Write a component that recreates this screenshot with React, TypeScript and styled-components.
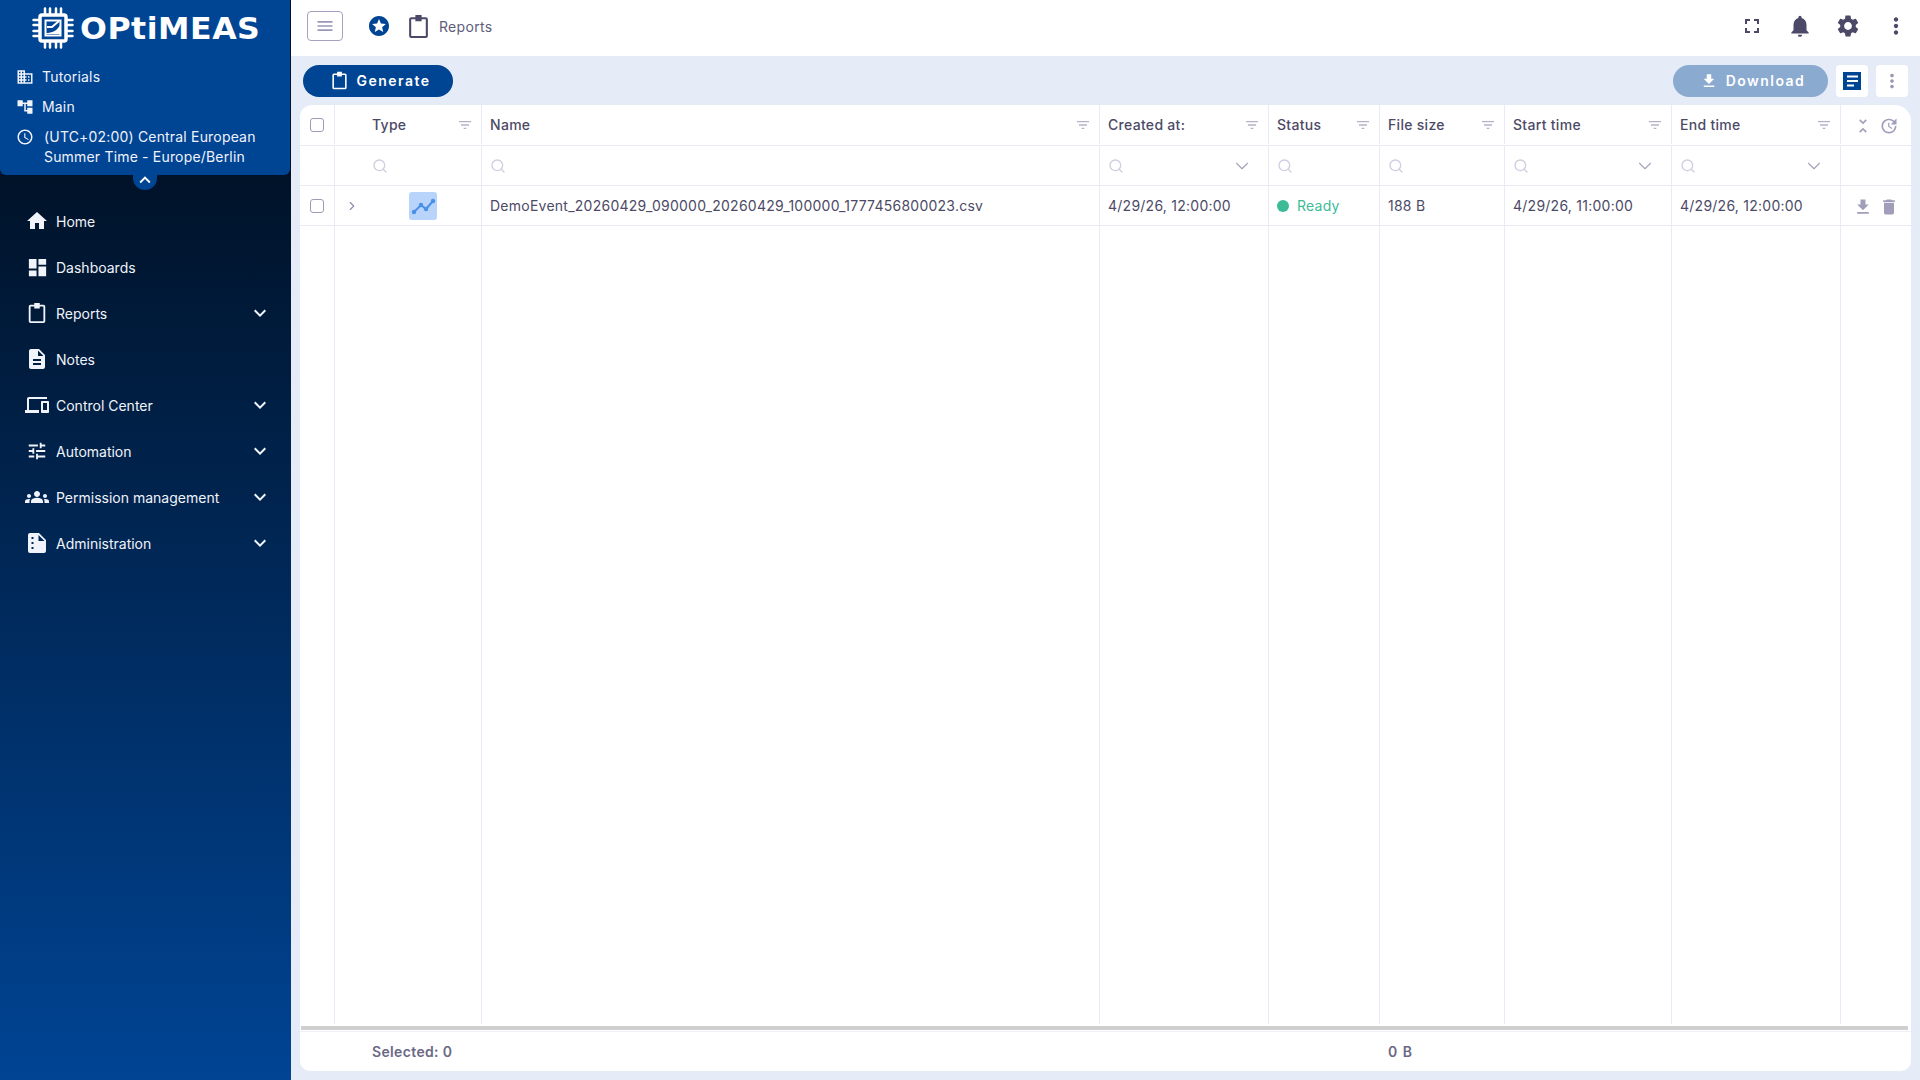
import React from "react";
import styled, { createGlobalStyle } from "styled-components";
import {
  MdAccountTree,
  MdDashboard,
  MdDelete,
  MdDescription,
  MdDevices,
  MdDomain,
  MdFileDownload,
  MdFilterList,
  MdFullscreen,
  MdGroups,
  MdHome,
  MdKeyboardArrowDown,
  MdKeyboardArrowUp,
  MdMenu,
  MdMoreVert,
  MdNotifications,
  MdOutlineAccessTime,
  MdSettings,
  MdStars,
  MdTune,
  MdUnfoldLess,
  MdUpdate,
} from "react-icons/md";
import { ChevronDown, ChevronRight, Search } from "lucide-react";

const ClipboardIcon = ({ size = 24 }: { size?: number }) => (
  <svg width={size} height={size} viewBox="0 0 24 24" fill="currentColor">
    <path
      fillRule="evenodd"
      d="M9 3V1h6v2h4a2 2 0 0 1 2 2v16a2 2 0 0 1-2 2H5a2 2 0 0 1-2-2V5a2 2 0 0 1 2-2h4zM5 5v16h14V5h-4v2H9V5H5z"
    />
  </svg>
);

const AdminIcon = ({ size = 24 }: { size?: number }) => (
  <svg width={size} height={size} viewBox="0 0 24 24" fill="currentColor">
    <path
      fillRule="evenodd"
      d="M5 2h9l7 7v11a2 2 0 0 1-2 2H5a2 2 0 0 1-2-2V4a2 2 0 0 1 2-2zM6.500 6v2h2V6h-2zm0 5v2h2v-2h-2zm0 5v2h2v-2h-2zM13.500 4v6h6z"
    />
  </svg>
);

const ChipLogo = () => (
  <svg width="42" height="42" viewBox="0 0 42 42" fill="none" stroke="#fff">
    <rect x="8" y="8" width="26" height="26" rx="2" strokeWidth="3.5" />
    <rect x="13.500" y="13.500" width="15" height="15" strokeWidth="2" />
    <path d="M14 26c6 0 11-2 14-8v9H14z" fill="#fff" stroke="none" />
    <path d="M15 20l5 0 7-6" stroke="#fff" strokeWidth="2" />
    <path
      d="M13 1.500v5M18 1.500v5M24 1.500v5M29 1.500v5M13 35.500v5M18 35.500v5M24 35.500v5M29 35.500v5M1.500 13h5M1.500 18h5M1.500 24h5M1.500 29h5M35.500 13h5M35.500 18h5M35.500 24h5M35.500 29h5"
      strokeWidth="2.500"
      strokeLinecap="round"
    />
  </svg>
);

const ChartGlyph = () => (
  <svg width="28" height="28" viewBox="0 0 28 28" fill="currentColor">
    <path d="M5 20l7-7 5 4 7-8" fill="none" stroke="currentColor" strokeWidth="2" />
    <circle cx="5" cy="20" r="2.200" />
    <circle cx="12" cy="13" r="2.200" />
    <circle cx="17" cy="17" r="2.200" />
    <circle cx="24" cy="9" r="2.200" />
  </svg>
);

const ViewGlyph = () => (
  <svg width="18" height="18" viewBox="0 0 18 18">
    <rect width="18" height="18" fill="#004494" />
    <rect x="4" y="3.500" width="11" height="2" fill="#fff" />
    <rect x="4" y="8" width="11" height="2" fill="#fff" />
    <rect x="4" y="12.500" width="7" height="2" fill="#fff" />
  </svg>
);

const GlobalStyle = createGlobalStyle`
  html, body {
    margin: 0;
    padding: 0;
    height: 100%;
    overflow: hidden;
    font-family: Inter, "Liberation Sans", sans-serif;
  }
  * {
    box-sizing: border-box;
  }
`;

const Page = styled.div`
  display: flex;
  height: 100vh;
  background: #e6ecf7;
`;

const Sidebar = styled.aside`
  width: 291px;
  flex-shrink: 0;
  display: flex;
  flex-direction: column;
  background: linear-gradient(180deg, #001228 16%, #004494 100%);
  color: #f0f3fa;
`;

const SideHead = styled.div`
  position: relative;
  width: 290px;
  height: 175px;
  padding: 8px 0 0 16px;
  background: #004494;
  border-radius: 0 0 6px 6px;
  font-size: 14px;
  letter-spacing: 0.18px;
`;

const Logo = styled.div`
  display: flex;
  align-items: center;
  gap: 6px;
  height: 40px;
  margin: 0 0 19px 16px;
`;

const LogoWord = styled.span`
  color: #fff;
  font-family: "DejaVu Sans", sans-serif;
  font-size: 31px;
  font-weight: 700;
  line-height: 40px;
  letter-spacing: 0.5px;
  white-space: nowrap;
  transform: scaleX(1.02);
  transform-origin: left center;
`;

const InfoRow = styled.div<{ $top?: boolean }>`
  display: flex;
  align-items: ${(p) => (p.$top ? "flex-start" : "center")};
  gap: ${(p) => (p.$top ? "10px" : "8px")};
  margin-bottom: 10px;
  min-height: 20px;
  line-height: 20px;
  svg {
    flex-shrink: 0;
    margin-top: ${(p) => (p.$top ? "1px" : "0")};
  }
`;

const CollapseTab = styled.div`
  position: absolute;
  left: 133px;
  bottom: -15px;
  width: 24px;
  height: 15px;
  background: #004494;
  border-radius: 0 0 12px 12px;
  display: flex;
  justify-content: center;
  align-items: flex-start;
  color: #fff;
  svg {
    margin-top: -6px;
  }
`;

const Menu = styled.nav`
  display: flex;
  flex-direction: column;
  padding-top: 23px;
`;

const MenuItem = styled.div`
  display: flex;
  align-items: center;
  height: 46px;
  padding: 0 19px 0 25px;
  font-size: 14px;
`;

const MenuIcon = styled.span`
  width: 24px;
  display: flex;
  justify-content: center;
  margin-right: 7px;
`;

const MenuLabel = styled.span`
  flex: 1;
`;

const Main = styled.main`
  flex: 1;
  min-width: 0;
  display: flex;
  flex-direction: column;
`;

const TopBar = styled.header`
  height: 56px;
  flex-shrink: 0;
  display: flex;
  align-items: center;
  padding: 0 10px 4px 16px;
  background: #fff;
  color: #4b4868;
`;

const MenuButton = styled.button`
  width: 36px;
  height: 30px;
  padding: 0;
  display: flex;
  align-items: center;
  justify-content: center;
  background: #fff;
  border: 1px solid #a5a3c2;
  border-radius: 4px;
  color: #9a98b8;
  margin-right: 24px;
`;

const StarWrap = styled.span`
  display: flex;
  color: #004494;
  margin-right: 15px;
`;

const Crumb = styled.span`
  margin-left: 8px;
  font-size: 14px;
  letter-spacing: 0.3px;
  color: #5e5c78;
`;

const TopRight = styled.div`
  margin-left: auto;
  display: flex;
  gap: 20px;
  align-items: center;
`;

const TopIcon = styled.span`
  width: 28px;
  display: flex;
  justify-content: center;
`;

const ToolBar = styled.div`
  height: 49px;
  flex-shrink: 0;
  display: flex;
  align-items: center;
  padding: 0 12px;
  gap: 8px;
`;

const PillButton = styled.button<{ $muted?: boolean; $width: number }>`
  width: ${(p) => p.$width}px;
  height: 32px;
  padding: 0 0 0 4px;
  display: flex;
  align-items: center;
  justify-content: center;
  gap: 8px;
  border: 0;
  border-radius: 16px;
  color: #fff;
  background: ${(p) => (p.$muted ? "#8aaad0" : "#004494")};
  font-family: inherit;
  font-size: 14px;
  font-weight: 600;
  letter-spacing: 1.45px;
  margin-right: ${(p) => (p.$muted ? "0" : "auto")};
`;

const SquareButton = styled.button`
  width: 32px;
  height: 32px;
  padding: 0;
  display: flex;
  align-items: center;
  justify-content: center;
  border: 0;
  border-radius: 4px;
  background: #fff;
  color: #9a98b0;
`;

const Card = styled.section`
  flex: 1;
  min-height: 0;
  display: flex;
  flex-direction: column;
  margin: 0 9px 9px 9px;
  background: #fff;
  border-radius: 12px 16px 10px 10px;
  overflow: hidden;
  font-size: 14px;
  color: #4c4a66;
`;

const Row = styled.div<{ $fill?: boolean; $head?: boolean }>`
  display: grid;
  grid-template-columns: 35px 147px 618px 169px 111px 125px 167px 169px 1fr;
  height: ${(p) => (p.$fill ? "auto" : p.$head ? "41px" : "40px")};
  flex: ${(p) => (p.$fill ? "1" : "none")};
  padding-bottom: ${(p) => (p.$head ? "1px" : "0")};
  border-bottom: ${(p) => (p.$fill ? "0" : "1px solid #e8ebf5")};
`;

const Cell = styled.div<{ $indent?: number }>`
  display: flex;
  align-items: center;
  justify-content: space-between;
  gap: 8px;
  min-width: 0;
  padding: 0 8px 0 ${(p) => p.$indent ?? 8}px;
  border-right: 1px solid #e8ebf5;
  white-space: nowrap;
  &:last-child {
    border-right: 0;
  }
`;

const HeadLabel = styled.span`
  font-weight: 500;
  letter-spacing: 0.3px;
`;

const FilterIcon = styled(MdFilterList)`
  color: #b4b2c8;
  flex-shrink: 0;
`;

const Check = styled.span`
  width: 14px;
  height: 14px;
  margin-left: 2px;
  border: 1px solid #9d9bb8;
  border-radius: 3px;
  background: #fff;
`;

const TypeCell = styled(Cell)`
  padding-right: 0;
  justify-content: flex-start;
`;

const Expander = styled.span`
  display: flex;
  color: #8f8dab;
  margin-left: 2px;
`;

const ChartTile = styled.span`
  width: 28px;
  height: 28px;
  margin-left: 42px;
  display: flex;
  align-items: center;
  justify-content: center;
  background: #b8d4fa;
  border-radius: 3px;
  color: #4a90e8;
`;

const CellText = styled.span`
  letter-spacing: 0.25px;
`;

const StatusBox = styled.span`
  display: flex;
  align-items: center;
  gap: 8px;
  letter-spacing: 0.25px;
  color: #3dbb97;
`;

const StatusDot = styled.span`
  width: 12px;
  height: 12px;
  border-radius: 50%;
  background: #3dbb97;
`;

const ActionIcons = styled.div`
  display: flex;
  align-items: center;
  gap: 6px;
  color: #a09eba;
  padding: 2px 0 0 4px;
`;

const DateChevron = styled(ChevronDown)`
  margin-right: 7px;
  color: #a5a3bd;
`;

const ScrollTrack = styled.div`
  height: 4px;
  margin: 2px 3px 1px 1px;
  flex-shrink: 0;
  background: #cfcfcf;
`;

const Footer = styled.div`
  display: grid;
  grid-template-columns: 1088px 1fr;
  height: 40px;
  flex-shrink: 0;
  align-items: center;
  border-top: 1px solid #eef0f7;
  color: #6b6885;
  font-size: 14px;
  font-weight: 600;
`;

const FooterCell = styled.span`
  padding-left: 72px;
  letter-spacing: 0.35px;
`;

const FooterSize = styled.span`
  letter-spacing: 1px;
`;

const menu = [
  { label: "Home", icon: <MdHome size={24} /> },
  { label: "Dashboards", icon: <MdDashboard size={23} /> },
  { label: "Reports", icon: <ClipboardIcon size={22} />, arrow: true },
  { label: "Notes", icon: <MdDescription size={24} /> },
  { label: "Control Center", icon: <MdDevices size={24} />, arrow: true },
  { label: "Automation", icon: <MdTune size={22} />, arrow: true },
  { label: "Permission management", icon: <MdGroups size={24} />, arrow: true },
  { label: "Administration", icon: <AdminIcon />, arrow: true },
];

const columns = [
  { label: "Name", date: false },
  { label: "Created at:", date: true },
  { label: "Status", date: false },
  { label: "File size", date: false },
  { label: "Start time", date: true },
  { label: "End time", date: true },
];

const App = () => {
  return (
    <Page>
      <GlobalStyle />
      <Sidebar>
        <SideHead>
          <Logo>
            <ChipLogo />
            <LogoWord>OPtiMEAS</LogoWord>
          </Logo>
          <InfoRow>
            <MdDomain size={18} />
            Tutorials
          </InfoRow>
          <InfoRow>
            <MdAccountTree size={18} />
            Main
          </InfoRow>
          <InfoRow $top>
            <MdOutlineAccessTime size={18} />
            <span>
              (UTC+02:00) Central European
              <br />
              Summer Time - Europe/Berlin
            </span>
          </InfoRow>
          <CollapseTab>
            <MdKeyboardArrowUp size={22} />
          </CollapseTab>
        </SideHead>
        <Menu>
          {menu.map((item) => (
            <MenuItem key={item.label}>
              <MenuIcon>{item.icon}</MenuIcon>
              <MenuLabel>{item.label}</MenuLabel>
              {item.arrow && <MdKeyboardArrowDown size={24} />}
            </MenuItem>
          ))}
        </Menu>
      </Sidebar>
      <Main>
        <TopBar>
          <MenuButton>
            <MdMenu size={20} />
          </MenuButton>
          <StarWrap>
            <MdStars size={24} />
          </StarWrap>
          <ClipboardIcon size={25} />
          <Crumb>Reports</Crumb>
          <TopRight>
            <TopIcon>
              <MdFullscreen size={24} />
            </TopIcon>
            <TopIcon>
              <MdNotifications size={26} />
            </TopIcon>
            <TopIcon>
              <MdSettings size={26} />
            </TopIcon>
            <TopIcon>
              <MdMoreVert size={26} />
            </TopIcon>
          </TopRight>
        </TopBar>
        <ToolBar>
          <PillButton $width={150}>
            <ClipboardIcon size={19} />
            Generate
          </PillButton>
          <PillButton $muted $width={155}>
            <MdFileDownload size={18} />
            Download
          </PillButton>
          <SquareButton>
            <ViewGlyph />
          </SquareButton>
          <SquareButton>
            <MdMoreVert size={22} />
          </SquareButton>
        </ToolBar>
        <Card>
          <Row $head>
            <Cell>
              <Check />
            </Cell>
            <Cell $indent={37}>
              <HeadLabel>Type</HeadLabel>
              <FilterIcon size={16} />
            </Cell>
            {columns.map((col) => (
              <Cell key={col.label}>
                <HeadLabel>{col.label}</HeadLabel>
                <FilterIcon size={16} />
              </Cell>
            ))}
            <Cell>
              <ActionIcons>
                <MdUnfoldLess size={20} />
                <MdUpdate size={20} />
              </ActionIcons>
            </Cell>
          </Row>
          <Row>
            <Cell />
            <Cell $indent={37}>
              <Search size={16} color="#cfcde0" strokeWidth={2} />
            </Cell>
            {columns.map((col) => (
              <Cell key={col.label}>
                <Search size={16} color="#cfcde0" strokeWidth={2} />
                {col.date && <DateChevron size={22} strokeWidth={1.2} />}
              </Cell>
            ))}
            <Cell />
          </Row>
          <Row>
            <Cell>
              <Check />
            </Cell>
            <TypeCell>
              <Expander>
                <ChevronRight size={14} />
              </Expander>
              <ChartTile>
                <ChartGlyph />
              </ChartTile>
            </TypeCell>
            <Cell>
              <CellText>DemoEvent_20260429_090000_20260429_100000_1777456800023.csv</CellText>
            </Cell>
            <Cell>
              <CellText>4/29/26, 12:00:00</CellText>
            </Cell>
            <Cell>
              <StatusBox>
                <StatusDot />
                Ready
              </StatusBox>
            </Cell>
            <Cell>
              <CellText>188 B</CellText>
            </Cell>
            <Cell>
              <CellText>4/29/26, 11:00:00</CellText>
            </Cell>
            <Cell>
              <CellText>4/29/26, 12:00:00</CellText>
            </Cell>
            <Cell>
              <ActionIcons>
                <MdFileDownload size={20} />
                <MdDelete size={20} />
              </ActionIcons>
            </Cell>
          </Row>
          <Row $fill>
            {Array.from({ length: 9 }, (_, i) => (
              <Cell key={i} />
            ))}
          </Row>
          <ScrollTrack />
          <Footer>
            <FooterCell>Selected: 0</FooterCell>
            <FooterSize>0 B</FooterSize>
          </Footer>
        </Card>
      </Main>
    </Page>
  );
};

export default App;
